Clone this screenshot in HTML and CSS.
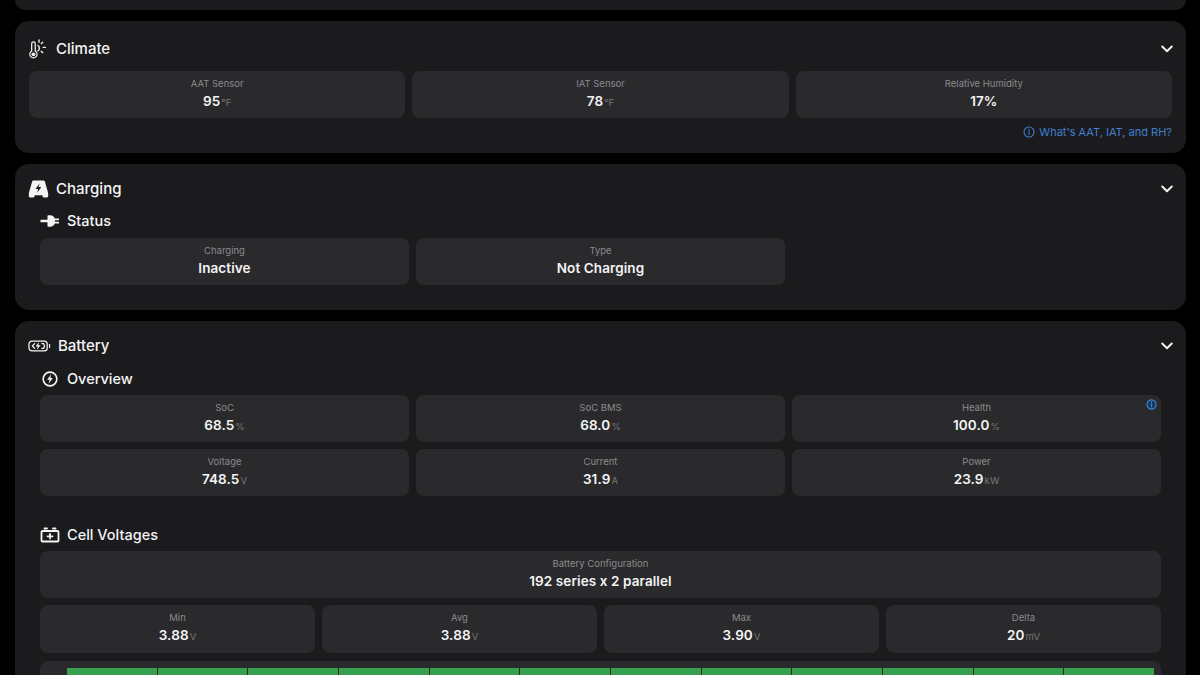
FILE: index.html
```html
<!DOCTYPE html>
<html lang="en">
<head>
<meta charset="utf-8">
<title>Vehicle details</title>
<link rel="stylesheet" href="styles.css">
</head>
<body>
<main class="page">
  <div class="card card-stub"></div>

  <section class="card card-climate">
    <header class="card-head">
      <svg class="head-icon" viewBox="0 0 20 20"><path class="ico-fill" fill-rule="evenodd" d="M5.2 2.2a2.3 2.3 0 0 1 2.3 2.3v6.7a4 4 0 1 1-4.6 0V4.5a2.3 2.3 0 0 1 2.3-2.3Zm0 1.2a1.1 1.1 0 0 0-1.1 1.1v7.3a2.9 2.9 0 1 0 2.2 0V4.5a1.1 1.1 0 0 0-1.1-1.1Z"/><circle class="ico-fill" cx="5.2" cy="14.6" r="1.8"/><path class="ico-line" d="M9.5 6.2a3 3 0 0 1 0 5M10.5 1v2M14 3l-1.4 1.4M16.5 8h-2M14 13l-1.4-1.4"/></svg>
      <h2 class="card-title">Climate</h2>
      <svg class="chevron" viewBox="0 0 12 8"><path d="M1.2 1.5 6 6.2l4.8-4.7"/></svg>
    </header>
    <div class="grid grid-3 grid-flush">
      <div class="tile"><span class="label">AAT Sensor</span><span class="value">95<small>°F</small></span></div>
      <div class="tile"><span class="label">IAT Sensor</span><span class="value">78<small>°F</small></span></div>
      <div class="tile"><span class="label">Relative Humidity</span><span class="value">17%</span></div>
    </div>
    <a class="info-link" href="#">
      <svg class="info-icon" viewBox="0 0 12 12"><circle cx="6" cy="6" r="5"/><path d="M6 5.4v3M6 3.2v.9"/></svg>
      What's AAT, IAT, and RH?
    </a>
  </section>

  <section class="card card-charging">
    <header class="card-head">
      <svg class="head-icon" viewBox="0 0 20 20"><path class="ico-fill" fill-rule="evenodd" d="M5.6 1.5h8.8c.9 0 1.5.5 1.8 1.3L19 12.6c.3 1 .2 2.3.2 3.7 0 .8-.5 1.2-1.2 1.2h-3c-.7 0-1.1-.5-1.2-1.2l-.2-.8H6.4l-.2.8c-.1.7-.5 1.2-1.2 1.2H2c-.7 0-1.2-.4-1.2-1.2 0-1.4-.1-2.7.2-3.7L3.8 2.8c.3-.8.9-1.3 1.8-1.3Zm5.4 2.7L7.2 9.6h2.5l-.9 3.6 3.9-5.5h-2.6l.9-3.5Z"/></svg>
      <h2 class="card-title">Charging</h2>
      <svg class="chevron" viewBox="0 0 12 8"><path d="M1.2 1.5 6 6.2l4.8-4.7"/></svg>
    </header>
    <div class="sub">
      <h3 class="sub-head">
        <svg class="sub-icon" viewBox="0 0 20 14"><path class="ico-fill" d="M7.5 2.2c0-.6.4-1 1-1h1.6c2.4 0 4.2 1.4 4.7 3.2h4.2v1.8h-4v1.6h4v1.8h-4.2c-.5 1.8-2.3 3.2-4.7 3.2H8.500c-.6 0-1-.4-1-1V8.200H.5V5.800h7Z"/></svg>
        Status
      </h3>
      <div class="grid grid-3">
        <div class="tile"><span class="label">Charging</span><span class="value">Inactive</span></div>
        <div class="tile"><span class="label">Type</span><span class="value">Not Charging</span></div>
      </div>
    </div>
  </section>

  <section class="card card-battery">
    <header class="card-head">
      <svg class="head-icon head-icon-wide" viewBox="0 0 24 14"><rect class="ico-line" x="1" y="2" width="19" height="10" rx="3"/><path class="ico-line" d="M22.500 5.500v3"/><path class="ico-fill" d="m11.500 2.800-3.600 4.700h2.300l-1 3.700 3.800-4.900h-2.300l.8-3.500Z"/><path class="ico-line" d="M7 4.500 4.500 7 7 9.500M14.500 4.500h1.800l1 2.500-1 2.500h-1.800"/></svg>
      <h2 class="card-title">Battery</h2>
      <svg class="chevron" viewBox="0 0 12 8"><path d="M1.2 1.5 6 6.2l4.800-4.700"/></svg>
    </header>
    <div class="sub">
      <h3 class="sub-head">
        <svg class="sub-icon" viewBox="0 0 20 20"><circle class="ico-line ico-heavy" cx="10" cy="10" r="7.600"/><path class="ico-fill" d="m11.200 4.800-4.400 6h2.700l-1 4.400 4.700-6.200h-2.800l.8-4.200Z"/></svg>
        Overview
      </h3>
      <div class="grid grid-3">
        <div class="tile"><span class="label">SoC</span><span class="value">68.5<small>%</small></span></div>
        <div class="tile"><span class="label">SoC BMS</span><span class="value">68.0<small>%</small></span></div>
        <div class="tile tile-info">
          <span class="label">Health</span><span class="value">100.0<small>%</small></span>
          <svg class="badge-info" viewBox="0 0 12 12"><circle cx="6" cy="6" r="5"/><path d="M6 5.400v3M6 3.200v.9"/></svg>
        </div>
        <div class="tile"><span class="label">Voltage</span><span class="value">748.5<small>V</small></span></div>
        <div class="tile"><span class="label">Current</span><span class="value">31.9<small>A</small></span></div>
        <div class="tile"><span class="label">Power</span><span class="value">23.9<small>kW</small></span></div>
      </div>
    </div>
    <div class="sub sub-cells">
      <h3 class="sub-head">
        <svg class="sub-icon" viewBox="0 0 20 16"><path class="ico-line ico-heavy" d="M2.500 4h15a1 1 0 0 1 1 1v8.500a1 1 0 0 1-1 1h-15a1 1 0 0 1-1-1V5a1 1 0 0 1 1-1Z"/><path class="ico-line ico-heavy" d="M4.500 1.500h2.500M13 1.500h2.500M7.500 9.300h5M10 7v4.600"/></svg>
        Cell Voltages
      </h3>
      <div class="tile tile-config"><span class="label">Battery Configuration</span><span class="value">192 series x 2 parallel</span></div>
      <div class="grid grid-4">
        <div class="tile"><span class="label">Min</span><span class="value">3.88<small>V</small></span></div>
        <div class="tile"><span class="label">Avg</span><span class="value">3.88<small>V</small></span></div>
        <div class="tile"><span class="label">Max</span><span class="value">3.90<small>V</small></span></div>
        <div class="tile"><span class="label">Delta</span><span class="value">20<small>mV</small></span></div>
      </div>
      <div class="cells">
        <div class="cell"></div><div class="cell"></div><div class="cell"></div><div class="cell"></div>
        <div class="cell"></div><div class="cell"></div><div class="cell"></div><div class="cell"></div>
        <div class="cell"></div><div class="cell"></div><div class="cell"></div><div class="cell"></div>
      </div>
    </div>
  </section>
</main>
</body>
</html>
```
FILE: styles.css
```css
* { box-sizing: border-box; }
html, body { margin: 0; height: 675px; overflow: hidden; background: #000; }
body { font-family: Inter, "Liberation Sans", sans-serif; color: #f4f4f5; }

.page { display: flex; flex-direction: column; gap: 11px; padding: 0 14px 0 15px; height: 675px; overflow: hidden; }

.card { background: #1b1b1d; border-radius: 14px; flex: none; }
.card-stub { height: 10px; border-radius: 0 0 14px 14px; }
.card-climate { height: 132px; padding: 14px 14px 0; }
.card-charging { height: 146px; padding: 11px 14px 0; }
.card-battery { padding: 11px 14px 0; }

.card-head { display: flex; align-items: center; gap: 7px; height: 28px; margin-bottom: 0; }
.card-climate .card-head { height: 28px; margin-bottom: 8px; }
.card-title { margin: 0; font-size: 15px; font-weight: 500; line-height: 20px; flex: 1; }

.head-icon { width: 21px; height: 21px; flex: none; margin-left: -1px; }
.head-icon-wide { width: 23px; height: 14px; margin-left: -1px; }
.sub-icon { width: 20px; height: 18px; flex: none; }

.ico-fill { fill: #f4f4f5; stroke: none; }
.ico-line { fill: none; stroke: #f4f4f5; stroke-width: 1.3; stroke-linecap: round; stroke-linejoin: round; }
.ico-heavy { stroke-width: 1.8; }

.chevron { width: 12px; height: 8px; flex: none; margin-right: -1px; fill: none; stroke: #f4f4f5; stroke-width: 1.9; stroke-linecap: round; stroke-linejoin: round; }

.sub { margin: 0 11px 0 11px; }
.sub-head { display: flex; align-items: center; gap: 7px; margin: 0; height: 20px; font-size: 14.500px; font-weight: 500; line-height: 20px; }
.card-charging .sub-head { margin-top: 8px; margin-bottom: 7px; }
.card-battery .sub-head { margin-top: 9px; margin-bottom: 6px; }
.card-battery .sub-cells { margin-top: 29px; }
.card-battery .sub-cells .sub-head { margin-top: 0; margin-bottom: 6px; }

.grid { display: grid; gap: 7px; }
.grid-3 { grid-template-columns: repeat(3, 1fr); }
.grid-4 { grid-template-columns: repeat(4, 1fr); margin-top: 7px; }

.tile { position: relative; height: 47px; background: #2a2a2c; border-radius: 8px; display: flex; flex-direction: column; align-items: center; padding-top: 7px; }
.tile-config { height: 47px; }
.grid-4 .tile { height: 48px; }
.label { font-size: 9.500px; line-height: 12px; color: #8b8b8e; }
.value { font-size: 13.500px; font-weight: 600; line-height: 18px; margin-top: 2px; letter-spacing: .1px; }
.value small { font-size: 9.500px; font-weight: 400; color: #77777a; margin-left: 1px; }

.info-link { display: flex; align-items: center; justify-content: flex-end; gap: 4px; margin-top: 7px; font-size: 11px; line-height: 14px; color: #3f7fd1; text-decoration: none; }
.info-icon { width: 12px; height: 12px; fill: none; stroke: #3f7fd1; stroke-width: 1.100; stroke-linecap: round; }
.badge-info { position: absolute; top: 4px; right: 4px; width: 11px; height: 11px; fill: #173a5e; stroke: #3f87d8; stroke-width: 1.200; stroke-linecap: round; }

.cells { display: grid; grid-template-columns: repeat(12, 1fr); gap: 1px; margin-top: 8px; height: 40px; padding: 7px 7px 0 27px; background: #2a2a2c; border-radius: 8px; }
.cell { background: #37a04f; }
```
